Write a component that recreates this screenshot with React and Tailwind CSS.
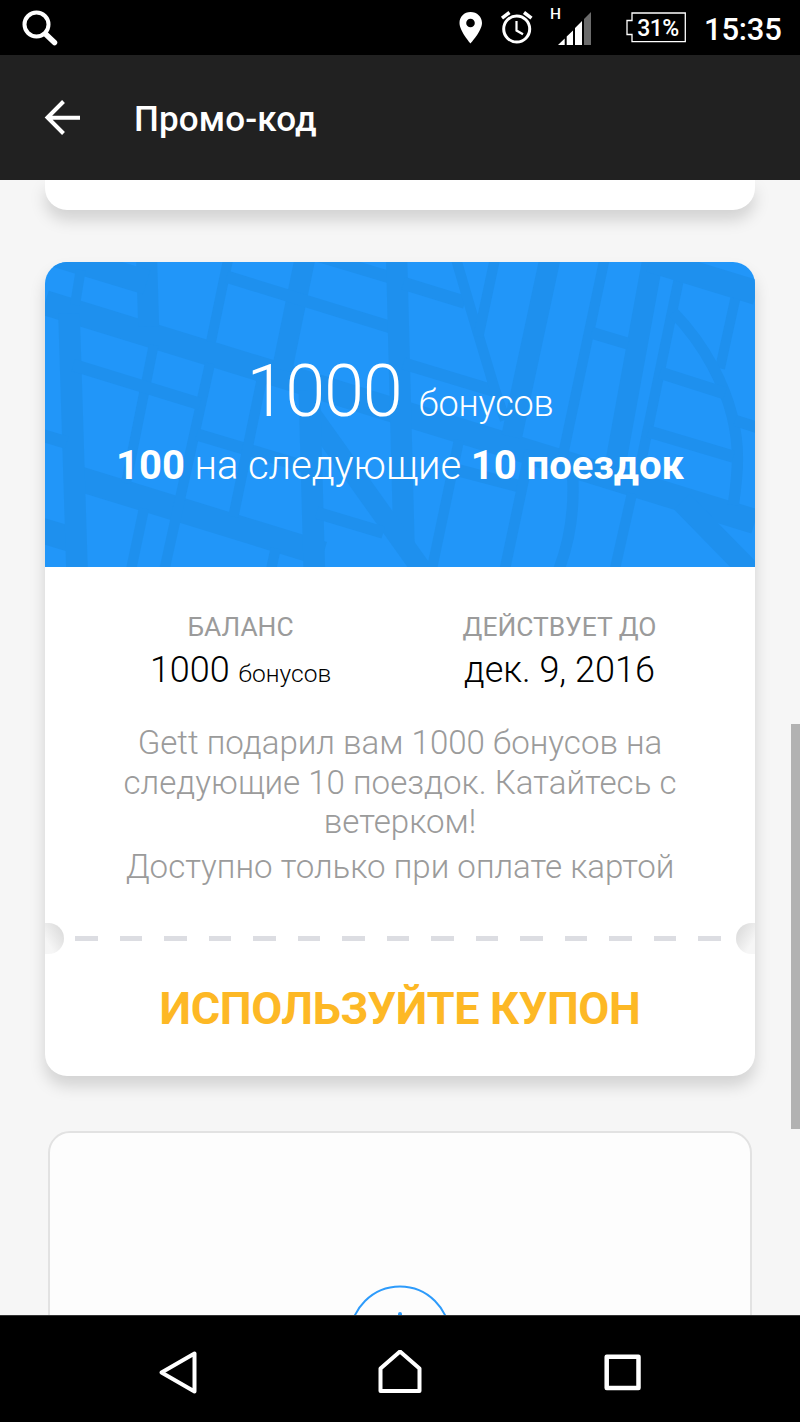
// App.jsx

// Streets behind the coupon title: d = path, w = street width
const streets = [
  { d: 'M45 158L2175 815', w: 75 },
  { d: 'M140 684L880 912', w: 75 },
  { d: 'M20 837L140 873', w: 76 },
  { d: 'M117 190L141 960', w: 65 },
  { d: 'M30 554L110 578', w: 38 },
  { d: 'M350 30L356 230', w: 63 },
  { d: 'M30 0L350 97', w: 74 },
  { d: 'M152 60L135 165', w: 30 },
  { d: 'M594 30L543 275', w: 30 },
  { d: 'M540 340L403 960', w: 31 },
  { d: 'M371 285L288 700', w: 30 },
  { d: 'M342 775L303 960', w: 31 },
  { d: 'M130 345L510 462', w: 37 },
  { d: 'M500 553L840 655', w: 37 },
  { d: 'M697 380L610 800', w: 31 },
  { d: 'M824 30L756 360', w: 62 },
  { d: 'M590 80L1090 234', w: 37 },
  { d: 'M860 16L1090 85', w: 37 },
  { d: 'M1100 30L1122 880', w: 64 },
  { d: 'M835 481L1177 961', w: 61 },
  { d: 'M838 420L853 960', w: 65 },
  { d: 'M860 788L1060 848', w: 37 },
  { d: 'M737 895L723 960', w: 31 },
  { d: 'M1120 100L1305 157', w: 39 },
  { d: 'M1120 340L1400 425', w: 37 },
  { d: 'M1279 30L1323 180L1395 420L1425 510', w: 31 },
  { d: 'M1394 30L1345 260', w: 31 },
  { d: 'M1559 30L1445 560', w: 63 },
  { d: 'M1723 30L1600 610', w: 31 },
  { d: 'M1628 680Q1636 830 1586 960', w: 34 },
  { d: 'M1868 30L1755 650', w: 63 },
  { d: 'M1947 85L1826 670', w: 31 },
  { d: 'M1806 730L1754 960', w: 31 },
  { d: 'M1685 248L1795 281', w: 36 },
  { d: 'M1860 30L2180 128', w: 74 },
  { d: 'M2116 145L2070 355', w: 30 },
  { d: 'M1930 187C2030 290 2085 410 2107 500S2125 660 2110 765', w: 34 },
  { d: 'M1890 368L2085 430', w: 37 },
  { d: 'M1855 544L2110 620', w: 37 },
  { d: 'M2115 511L2180 532', w: 34 },
  { d: 'M1955 755L2187 992', w: 66 },
  { d: 'M1287 570L1205 960', w: 31 },
  { d: 'M1270 657L1480 712', w: 37 },
  { d: 'M1500 600L1424 960', w: 32 },
];

const dashes = Array.from({ length: 15 }, (_, i) => i);

function StatusBar() {
  return (
    <div className="flex h-[55px] shrink-0 items-center bg-black text-white">
      <svg className="ml-5 h-[55px] w-10" viewBox="20 0 40 55" fill="none" stroke="white">
        <circle cx="36.5" cy="24.5" r="12" strokeWidth="4" />
        <path d="M45.500 34L54.500 42.500" strokeWidth="5.500" strokeLinecap="round" />
      </svg>

      {/* location, alarm and signal */}
      <svg className="ml-auto h-[55px] w-[145px]" viewBox="455 0 145 55">
        <path fill="white" fillRule="evenodd" d="M470.500 12C464.200 12 459.500 16.800 459.500 23C459.500 31 470.500 43.500 470.500 43.500S482 31 482 23C482 16.800 477 12 470.500 12ZM470.500 18.700A4.300 4.300 0 1 1 470.500 27.300A4.300 4.300 0 1 1 470.500 18.700Z" />
        <g fill="none" stroke="white">
          <circle cx="516.700" cy="29" r="13" strokeWidth="3" />
          <path d="M516.500 21V30.500L523 34.300" strokeWidth="2.200" />
          <path d="M502 18.200L509.500 12.500M531.500 18.200L524 12.500" strokeWidth="3.500" />
        </g>
        <path fill="white" d="M558 45L564.700 38.500V45ZM566.700 36.500L573 30.500V45H566.700ZM575 28L582 21V45H575Z" />
        <path fill="#6b6b6b" d="M584 19L591 12V45H584Z" />
        <text x="550" y="18.500" fill="white" fontSize="15.500" fontWeight="500" fontFamily="Roboto, sans-serif">H</text>
      </svg>

      <div className="relative ml-[26px] flex h-[55px] w-[60px] items-center justify-center">
        <svg className="absolute inset-0 h-[55px] w-[60px]" viewBox="626 0 60 55" fill="none" stroke="white" strokeWidth="1.300">
          <path d="M632 13H685.300V41.700H632V34.500H627V20.500H632Z" />
        </svg>
        <span className="relative ml-[4px] pt-px text-[23px] font-medium leading-none tracking-[-0.5px]">31%</span>
      </div>
      <span className="ml-[18px] mr-[16px] w-20 whitespace-nowrap pt-[4px] text-[31px] font-medium leading-none tracking-[-0.2px]">15:35</span>
    </div>
  );
}

function Header() {
  return (
    <header className="flex h-[125px] shrink-0 items-center bg-[#212121] text-white">
      <svg className="ml-[44px] h-[38px] w-[38px]" viewBox="0 0 38 38" fill="none" stroke="white" strokeWidth="4">
        <path d="M19.500 2.500L3.500 18.500L19.500 34.500M3.500 18.700H36" />
      </svg>
      <h1 className="ml-[52px] pt-[4px] text-[35px] font-medium leading-none tracking-[0.15px]">Промо-код</h1>
    </header>
  );
}

function CouponTop() {
  return (
    <div className="relative h-[305px] overflow-hidden rounded-t-[22px] bg-[#2196f9] text-center text-white">
      <svg className="absolute inset-0 h-full w-full" viewBox="45 36 2130 915" fill="none" stroke="#1e90ee">
        {streets.map((s) => (
          <path key={s.d} d={s.d} strokeWidth={s.w} />
        ))}
      </svg>
      <div className="relative pt-[94px]">
        <p className="whitespace-nowrap text-[72px] font-light leading-[72px] tracking-[-1.2px]">
          1000 <span className="ml-px text-[36px] tracking-[-0.2px]">бонусов</span>
        </p>
        <p className="mt-[6px] h-10 whitespace-nowrap text-[40px] font-light leading-[40px] tracking-[-0.05px]">
          <b className="font-bold">100</b> на следующие <b className="font-bold">10 поездок</b>
        </p>
      </div>
    </div>
  );
}

function Coupon() {
  return (
    <section className="mx-[45px] mt-[52px] h-[814px] shrink-0 rounded-[22px] bg-white shadow-[0_10px_16px_rgba(0,0,0,0.15)]">
      <CouponTop />

      <div className="flex px-[36px] pt-[44px] text-center">
        <div className="w-[319px]">
          <p className="text-[26.400px] leading-8 text-[#9b9b9b]">БАЛАНС</p>
          <p className="mt-[5px] whitespace-nowrap text-[36px] font-light leading-[44px] text-black">
            1000 <span className="text-[24.500px]">бонусов</span>
          </p>
        </div>
        <div className="w-[319px]">
          <p className="text-[26.400px] leading-8 text-[#9b9b9b]">ДЕЙСТВУЕТ ДО</p>
          <p className="mt-[5px] whitespace-nowrap text-[36px] font-light leading-[44px] text-black">дек. 9, 2016</p>
        </div>
      </div>

      <div className="mt-[27px] text-center text-[33.100px] font-light leading-[39.500px] text-[#9b9b9b]">
        <p>
          Gett подарил вам 1000 бонусов на
          <br />
          следующие 10 поездок. Катайтесь с
          <br />
          ветерком!
        </p>
        <p className="mt-[5px]">Доступно только при оплате картой</p>
      </div>

      {/* tear line */}
      <div className="mt-[37px] flex h-[31px] items-center">
        <span className="h-[31px] w-[19px] rounded-r-full bg-linear-to-bl from-[#d6d6d6] to-[#f6f6f6] to-75%" />
        <div className="mx-[11px] flex flex-1 justify-between">
          {dashes.map((i) => (
            <span key={i} className="h-[5px] w-[22.500px] bg-[#dcdde2]" />
          ))}
        </div>
        <span className="ml-[4px] h-[31px] w-[19px] rounded-l-full bg-linear-to-br from-[#d6d6d6] to-[#f6f6f6] to-75%" />
      </div>

      <button className="mt-[28px] block w-full whitespace-nowrap text-center text-[45px] font-bold leading-[54px] tracking-[-0.35px] text-[#fdb825]">
        ИСПОЛЬЗУЙТЕ КУПОН
      </button>
    </section>
  );
}

function NavBar() {
  return (
    <nav className="flex h-[107px] shrink-0 items-center justify-center gap-[178px] border-t border-[#333] bg-black pt-[6px]">
      <svg className="h-11 w-11" viewBox="156 1350 44 44" fill="none" stroke="white" strokeWidth="4" strokeLinejoin="round">
        <path d="M161.500 1372.500L194.500 1353.500V1391.500Z" />
      </svg>
      <svg className="h-11 w-11" viewBox="378 1350 44 44" fill="none" stroke="white" strokeWidth="4" strokeLinejoin="round">
        <path d="M400 1351.500L419.500 1368.500V1391H380.500V1368.500Z" />
      </svg>
      <svg className="h-11 w-11" viewBox="600 1350 44 44" fill="none" stroke="white" strokeWidth="4.500" strokeLinejoin="round">
        <path d="M606.700 1356.700H638.500V1388H606.700Z" />
      </svg>
    </nav>
  );
}

export default function App() {
  return (
    <div className="flex h-[1422px] w-[800px] flex-col overflow-hidden bg-[#f6f6f6] font-['Roboto',sans-serif]">
      <StatusBar />
      <Header />

      <main className="relative flex h-[1135px] shrink-0 flex-col overflow-hidden">
        <div className="mx-[45px] h-[30px] shrink-0 rounded-b-[22px] bg-white shadow-[0_10px_16px_rgba(0,0,0,0.15)]" />
        <Coupon />

        {/* next card, cut off by the navigation bar */}
        <div className="mx-[48px] mt-[55px] flex h-[400px] shrink-0 justify-center rounded-[22px] border-2 border-[#e2e2e2] bg-[#fdfdfd] pt-[152px]">
          <svg className="h-[102px] w-[102px]" viewBox="0 0 102 102" fill="none" stroke="#2d9bfb" strokeWidth="2">
            <circle cx="51" cy="51" r="49.500" />
            <path d="M51 29V73M29 51H73" strokeWidth="4" strokeLinecap="round" />
          </svg>
        </div>

        <div className="absolute right-0 top-[544px] h-[405px] w-[9px] bg-[#b2b2b2]" />
      </main>

      <NavBar />
    </div>
  );
}
